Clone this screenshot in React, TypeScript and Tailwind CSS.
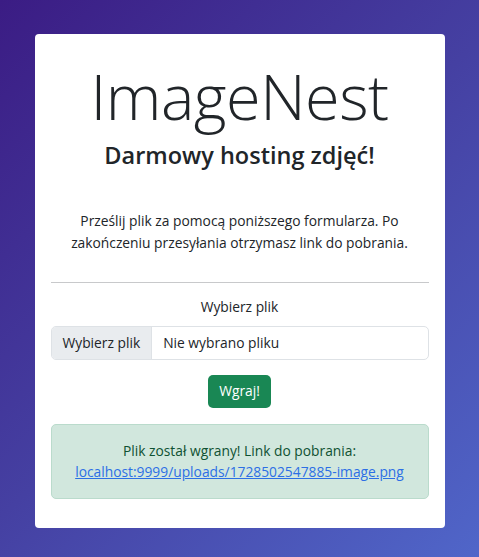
export default function App() {
  return (
    <div
      className="min-h-screen w-full flex justify-center items-start pt-[34px] bg-[linear-gradient(135deg,#3b1c84_0%,#4540a2_50%,#5066c9_100%)]"
      style={{ fontFamily: '"Open Sans", "Noto Sans", sans-serif' }}
    >
      <div className="w-[410px] bg-white rounded-[4px] px-[16px] pt-[22px] pb-[29px] text-center text-[#212529] text-[13.8px] leading-[21.6px]">
        <h1 className="text-[63px] font-light leading-[80px] tracking-[-0.5px]">ImageNest</h1>
        <h2 className="text-[23.5px] font-semibold leading-[30px] mt-[4px]">Darmowy hosting zdjęć!</h2>
        <p className="mt-[40px] px-[8px]">
          Prześlij plik za pomocą poniższego formularza. Po zakończeniu przesyłania otrzymasz link do pobrania.
        </p>
        <hr className="mt-[29px] border-t border-[#c8c9cb]" />
        <label className="block mt-[13px]">Wybierz plik</label>
        <div className="mt-[8px] flex h-[34px] border border-[#dee2e6] rounded-[5px] overflow-hidden text-left">
          <span className="flex items-center px-[11px] bg-[#e9ecef] border-r border-[#dee2e6]">Wybierz plik</span>
          <span className="flex items-center px-[11px]">Nie wybrano pliku</span>
        </div>
        <button className="mt-[15px] h-[33px] px-[11px] rounded-[5px] bg-[#198754] text-white">Wgraj!</button>
        <div className="mt-[16px] rounded-[5px] border border-[#badbcc] bg-[#d1e7dd] text-[#0f5132] py-[15px] px-[14px]">
          <div>Plik został wgrany! Link do pobrania:</div>
          <a href="#" className="underline text-[#2c6fe5]">
            localhost:9999/uploads/1728502547885-image.png
          </a>
        </div>
      </div>
    </div>
  );
}
